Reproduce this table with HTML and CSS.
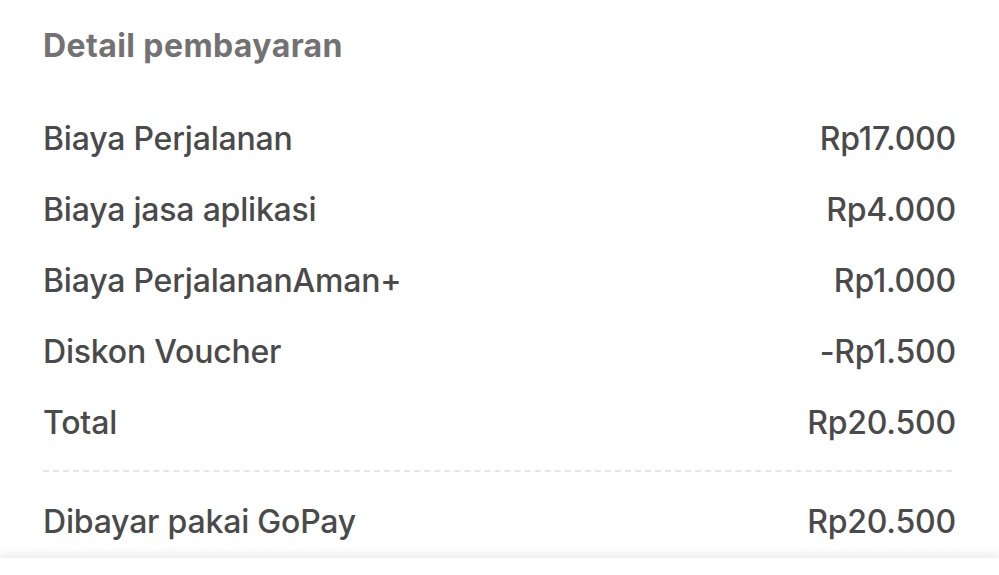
FILE: index.html
```html
<!DOCTYPE html>
<html lang="id">
<head>
  <meta charset="UTF-8" />
  <meta name="viewport" content="width=device-width, initial-scale=1.0" />
  <title>Detail pembayaran</title>
  <link rel="stylesheet" href="styles.css">
</head>
<body>
  <div class="payment">
    <h2 class="title">Detail pembayaran</h2>
    <div class="rows">
      <div class="row"><span>Biaya Perjalanan</span><span>Rp17.000</span></div>
      <div class="row"><span>Biaya jasa aplikasi</span><span>Rp4.000</span></div>
      <div class="row"><span>Biaya PerjalananAman+</span><span>Rp1.000</span></div>
      <div class="row"><span>Diskon Voucher</span><span>-Rp1.500</span></div>
      <div class="row"><span>Total</span><span>Rp20.500</span></div>
    </div>
    <div class="divider"></div>
    <div class="row paid"><span>Dibayar pakai GoPay</span><span>Rp20.500</span></div>
  </div>
  <div class="footer"></div>
</body>
</html>
```

FILE: styles.css
```css
* {
  margin: 0;
  padding: 0;
  box-sizing: border-box;
}
body {
  font-family: Inter, "Noto Sans", sans-serif;
  background: #fff;
  color: #4a4a4a;
  overflow: hidden;
}
.payment {
  height: 558px;
  padding: 26px 43px 0 43px;
}
.title {
  font-size: 32px;
  font-weight: 700;
  color: #727272;
  letter-spacing: 0.4px;
  margin-bottom: 38px;
}
.rows {
  display: flex;
  flex-direction: column;
}
.row {
  display: flex;
  justify-content: space-between;
  align-items: center;
  height: 71px;
  font-size: 32px;
  font-weight: 500;
  letter-spacing: -0.2px;
}
.divider {
  border-top: 2px dashed #e6e6e6;
  margin: 12px 4px 0 0;
}
.paid {
  margin-top: 14px;
}
.footer {
  height: 17px;
  background: #fff;
  box-shadow: 0 -5px 8px rgba(0, 0, 0, 0.07);
  position: relative;
}
```
